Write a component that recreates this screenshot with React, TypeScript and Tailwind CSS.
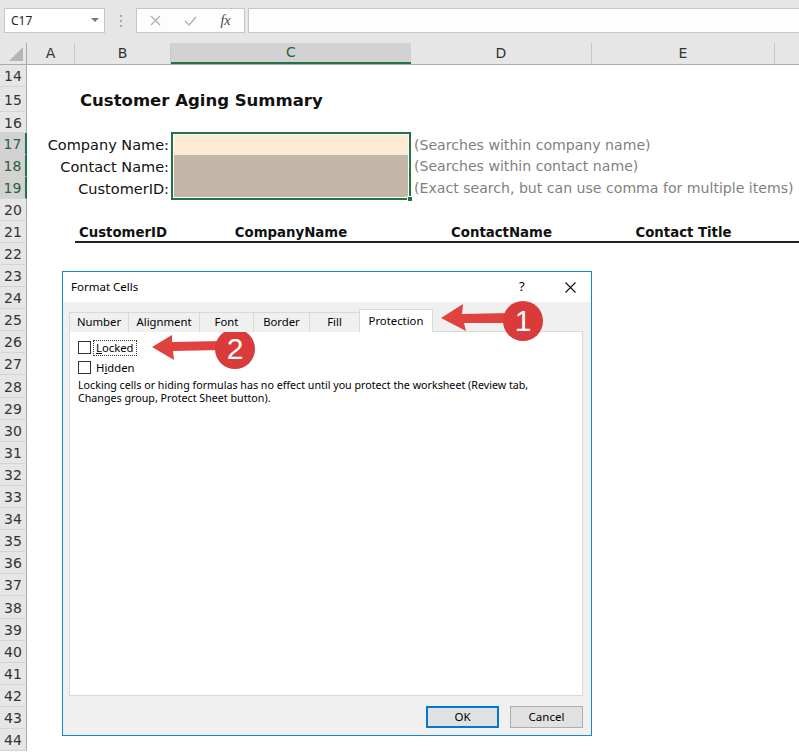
import React from 'react'

const SHEET = { fontFamily: '"DejaVu Sans", "Liberation Sans", sans-serif' }
const UI = { fontFamily: '"Noto Sans", "Open Sans", sans-serif' }

function RowHead({ n, sel }: { n: number; sel?: boolean }) {
  return (
    <div
      className={
        'w-[27px] shrink-0 h-full flex items-center justify-center pt-[2px] text-[14px] border-b border-[#d4d4d4] ' +
        (sel
          ? 'bg-[#d2d2d2] text-[#2b5e40] border-r-2 border-r-[#217346]'
          : 'bg-[#e6e6e6] text-[#333] border-r border-r-[#ababab]')
      }
      style={SHEET}
    >
      {n}
    </div>
  )
}

function Row({
  n,
  h,
  children,
}: {
  n: number
  h: string
  children?: React.ReactNode
}) {
  return (
    <div className={'flex ' + h}>
      <RowHead n={n} />
      <div className="flex-1 flex">{children}</div>
    </div>
  )
}

function TopBar() {
  return (
    <div className="h-[43px] bg-[#e6e6e6] flex items-start pt-[8px] pl-[4px]" style={UI}>
      <div className="w-[101px] h-[25px] shrink-0 bg-white border border-[#c6c6c6] flex items-center justify-between pl-[6px] pr-[5px] text-[12px] text-[#222]">
        <span>C17</span>
        <svg width="8" height="5" viewBox="0 0 8 5">
          <path d="M0 0 L8 0 L4 4 Z" fill="#7a7a7a" />
        </svg>
      </div>
      <div className="w-[31px] h-[25px] shrink-0 flex flex-col items-center justify-center gap-[3px]">
        <div className="w-[2px] h-[2px] bg-[#a8a8a8]" />
        <div className="w-[2px] h-[2px] bg-[#a8a8a8]" />
        <div className="w-[2px] h-[2px] bg-[#a8a8a8]" />
      </div>
      <div className="w-[109px] h-[25px] shrink-0 bg-[#fdfdfd] border border-[#c6c6c6] flex items-center">
        <div className="w-[37px] flex justify-center">
          <svg width="11" height="11" viewBox="0 0 11 11">
            <path d="M1 1 L10 10 M10 1 L1 10" stroke="#b0b0b0" strokeWidth="1.3" />
          </svg>
        </div>
        <div className="w-[33px] flex justify-center">
          <svg width="13" height="10" viewBox="0 0 13 10">
            <path d="M1 5 L5 9 L12 1" stroke="#b0b0b0" strokeWidth="1.4" fill="none" />
          </svg>
        </div>
        <div
          className="w-[37px] flex justify-center text-[14px] italic text-[#444]"
          style={{ fontFamily: '"Liberation Serif", serif' }}
        >
          fx
        </div>
      </div>
      <div className="ml-[3px] flex-1 h-[25px] bg-[#fdfdfd] border-y border-l border-[#c6c6c6]" />
    </div>
  )
}

function ColHeads() {
  const cell = 'h-full shrink-0 flex items-center justify-center border-r border-[#c8c8c8]'
  return (
    <div
      className="h-[22px] flex bg-[#e6e6e6] border-b border-[#ababab] text-[14px] text-[#333]"
      style={SHEET}
    >
      <div className="w-[27px] shrink-0 h-full border-r border-[#ababab] flex items-end justify-end p-[3px]">
        <svg width="14" height="14" viewBox="0 0 14 14">
          <path d="M14 0 L14 14 L0 14 Z" fill="#b5b5b5" />
        </svg>
      </div>
      <div className={cell + ' w-[48px]'}>A</div>
      <div className={cell + ' w-[96px]'}>B</div>
      <div className="w-[240px] shrink-0 h-full flex items-center justify-center bg-[#d2d2d2] border-b-2 border-[#217346] text-[#2b5e40]">
        C
      </div>
      <div className={cell + ' w-[181px]'}>D</div>
      <div className={cell + ' w-[183px]'}>E</div>
      <div className="flex-1" />
    </div>
  )
}

function InputBlock() {
  const labels = ['Company Name:', 'Contact Name:', 'CustomerID:']
  const notes = [
    '(Searches within company name)',
    '(Searches within contact name)',
    '(Exact search, but can use comma for multiple items)',
  ]
  return (
    <div className="flex h-[66px]" style={SHEET}>
      <div className="w-[27px] shrink-0 flex flex-col">
        {[17, 18, 19].map((n) => (
          <div key={n} className="h-[22px]">
            <RowHead n={n} sel />
          </div>
        ))}
      </div>
      <div className="w-[144px] shrink-0 flex flex-col items-end pr-[2px] pt-[2px] text-[14.5px] text-[#111]">
        {labels.map((l) => (
          <div key={l} className="h-[22px] flex items-center whitespace-nowrap">
            {l}
          </div>
        ))}
      </div>
      <div className="relative shrink-0 w-[240px] h-[68px] -mt-[1px] border-2 border-[#217346]">
        <div className="h-full border border-white flex flex-col">
          <div className="h-[20px] bg-[#fdebd3]" />
          <div className="flex-1 bg-[#c4b6a6]" />
        </div>
        <div className="absolute -right-[4px] -bottom-[4px] w-[6px] h-[6px] bg-[#217346] border border-white" />
      </div>
      <div className="flex-1 min-w-0 flex flex-col pl-[3px] pt-[2px] text-[14.1px] text-[#7f7f7f]">
        {notes.map((t) => (
          <div key={t} className="h-[22px] flex items-center whitespace-nowrap">
            {t}
          </div>
        ))}
      </div>
    </div>
  )
}

function Dialog() {
  const tabs = [
    { t: 'Number', w: 'w-[59px]' },
    { t: 'Alignment', w: 'w-[71px]' },
    { t: 'Font', w: 'w-[54px]' },
    { t: 'Border', w: 'w-[56px]' },
    { t: 'Fill', w: 'w-[50px]' },
  ]
  return (
    <div
      className="absolute left-[62px] top-[271px] w-[530px] h-[465px] border border-[#1883d7] bg-[#f0f0f0] flex flex-col text-[11.3px] text-black"
      style={UI}
    >
      <div className="h-[30px] bg-white flex items-center pl-[8px] pr-[15px] text-[11.5px]">
        <span className="flex-1">Format Cells</span>
        <span className="w-[10px] mr-[36px] text-[13px]">?</span>
        <svg width="11" height="11" viewBox="0 0 11 11">
          <path d="M0.5 0.5 L10.5 10.5 M10.5 0.5 L0.5 10.5" stroke="#111" strokeWidth="1.1" />
        </svg>
      </div>
      <div className="pl-[6px] pt-[7px] flex flex-col">
        <div className="flex items-end h-[22px] relative z-10">
          {tabs.map((tab) => (
            <div
              key={tab.t}
              className={
                tab.w +
                ' h-[20px] flex items-center justify-center border-t border-l border-[#d9d9d9] bg-[#f0f0f0] mb-[-1px]'
              }
            >
              {tab.t}
            </div>
          ))}
          <div className="w-[74px] h-[23px] flex items-start pt-[3px] justify-center bg-white border-x border-t border-[#d9d9d9] mb-[-1px]">
            Protection
          </div>
        </div>
        <div className="w-[514px] h-[365px] bg-white border border-[#d9d9d9] pl-[8px] pt-[7px]">
          <div className="flex items-center h-[17px]">
            <div className="w-[13px] h-[13px] border border-[#333] bg-white" />
            <div className="ml-[2px] px-[2px] border border-dotted border-[#333] leading-[14px]">
              <span className="underline">L</span>ocked
            </div>
          </div>
          <div className="flex items-center h-[17px] mt-[3px]">
            <div className="w-[13px] h-[13px] border border-[#333] bg-white" />
            <div className="ml-[5px] leading-[14px]">
              H<span className="underline">i</span>dden
            </div>
          </div>
          <p className="mt-[3px] leading-[12.5px] text-[10.7px] w-[490px]">
            Locking cells or hiding formulas has no effect until you protect the worksheet (Review tab,
            Changes group, Protect Sheet button).
          </p>
        </div>
        <div className="w-[514px] flex justify-end gap-[11px] mt-[10px]">
          <button className="w-[73px] h-[22px] bg-[#e1e1e1] border-2 border-[#0078d7] text-[11.5px]">OK</button>
          <button className="w-[73px] h-[22px] bg-[#e1e1e1] border border-[#adadad] text-[11.5px]">Cancel</button>
        </div>
      </div>
    </div>
  )
}

function Callouts() {
  const badge =
    'absolute w-[40px] h-[40px] rounded-full bg-[#d93a3a] flex items-center justify-center text-white text-[30px] leading-none'
  return (
    <>
      <svg className="absolute left-0 top-0 pointer-events-none" width="799" height="752">
        <polygon points="441,318 463,304 462,314 510,313 510,323 464,323 466,331" fill="#e0433f" />
        <polygon points="152,347 172,335 172,342 222,341 222,350 173,351 174,360" fill="#e0433f" />
      </svg>
      <div className={badge + ' left-[503px] top-[301px]'} style={{ fontFamily: '"Liberation Sans", sans-serif' }}>
        1
      </div>
      <div className={badge + ' left-[215px] top-[329px]'} style={{ fontFamily: '"Liberation Sans", sans-serif' }}>
        2
      </div>
    </>
  )
}

export default function App() {
  const rest = Array.from({ length: 23 }, (_, i) => 22 + i)
  return (
    <div className="relative w-[799px] h-[752px] overflow-hidden bg-white">
      <TopBar />
      <ColHeads />
      <div style={SHEET}>
        <Row n={14} h="h-[22px]" />
        <Row n={15} h="h-[25px]">
          <div className="pl-[53px] pt-[3px] flex items-center text-[16.5px] font-bold text-[#111] whitespace-nowrap">
            Customer Aging Summary
          </div>
        </Row>
        <Row n={16} h="h-[21px]" />
        <InputBlock />
        <Row n={20} h="h-[22px]" />
        <Row n={21} h="h-[22px]">
          <div className="w-[48px] shrink-0" />
          <div className="flex-1 flex items-center pt-[3px] border-b-2 border-[#222] text-[13.3px] font-bold text-[#111]">
            <div className="w-[96px] shrink-0 text-center">CustomerID</div>
            <div className="w-[240px] shrink-0 text-center">CompanyName</div>
            <div className="w-[181px] shrink-0 text-center">ContactName</div>
            <div className="w-[183px] shrink-0 text-center">Contact Title</div>
          </div>
        </Row>
        {rest.map((n) => (
          <Row key={n} n={n} h={n === 28 || n === 38 ? 'h-[23px]' : 'h-[22px]'} />
        ))}
      </div>
      <Dialog />
      <Callouts />
    </div>
  )
}
